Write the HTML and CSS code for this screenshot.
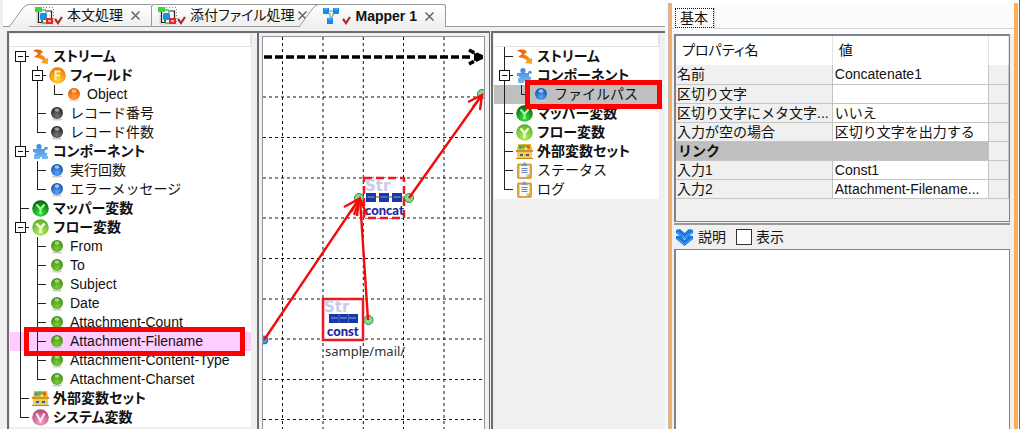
FILE: index.html
```
<!DOCTYPE html>
<html lang="ja">
<head>
<meta charset="utf-8">
<title>Mapper1</title>
<link rel="stylesheet" href="styles.css">
</head>
<body>
<svg class="defs" width="0" height="0" aria-hidden="true">
  <defs>
    <radialGradient id="gBlue" cx=".5" cy=".75" r=".7"><stop offset="0" stop-color="#5aa5f5"/><stop offset="1" stop-color="#0f4fb0"/></radialGradient>
    <radialGradient id="gGreen" cx=".5" cy=".75" r=".7"><stop offset="0" stop-color="#7ccb3a"/><stop offset="1" stop-color="#3f8f10"/></radialGradient>
    <radialGradient id="gBlack" cx=".5" cy=".75" r=".7"><stop offset="0" stop-color="#777"/><stop offset="1" stop-color="#222"/></radialGradient>
    <radialGradient id="gOrange" cx=".5" cy=".75" r=".7"><stop offset="0" stop-color="#ffa030"/><stop offset="1" stop-color="#e85c00"/></radialGradient>
    <radialGradient id="gField" cx=".5" cy=".75" r=".8"><stop offset="0" stop-color="#ffd83a"/><stop offset="1" stop-color="#ee6a00"/></radialGradient>
    <radialGradient id="gMapper" cx=".5" cy=".8" r=".8"><stop offset="0" stop-color="#3be83b"/><stop offset="1" stop-color="#045c10"/></radialGradient>
    <radialGradient id="gFlow" cx=".5" cy=".8" r=".8"><stop offset="0" stop-color="#b8f060"/><stop offset="1" stop-color="#5aab2a"/></radialGradient>
    <radialGradient id="gSys" cx=".5" cy=".8" r=".8"><stop offset="0" stop-color="#f4a0c8"/><stop offset="1" stop-color="#b0447c"/></radialGradient>
    <linearGradient id="gStream" x2="1" y2="1"><stop offset="0" stop-color="#e85010"/><stop offset="1" stop-color="#ffb020"/></linearGradient>
    <linearGradient id="gPuzzle" x2="0" y2="1"><stop offset="0" stop-color="#3a88d8"/><stop offset="1" stop-color="#78b8f4"/></linearGradient>
    <linearGradient id="gTab" x2="0" y2="1"><stop offset="0" stop-color="#ffffff"/><stop offset="1" stop-color="#efefef"/></linearGradient>
    <symbol id="blue" viewBox="0 0 17 17"><ellipse cx="8" cy="14.500" rx="5" ry="1" fill="#ccc"/><circle cx="8" cy="8" r="6" fill="url(#gBlue)"/><ellipse cx="8" cy="5" rx="2.500" ry="1.800" fill="#fff" opacity=".6"/></symbol>
    <symbol id="green" viewBox="0 0 17 17"><ellipse cx="8" cy="14.500" rx="5" ry="1" fill="#ccc"/><circle cx="8" cy="8" r="6" fill="url(#gGreen)"/><ellipse cx="8" cy="5" rx="2.500" ry="1.800" fill="#fff" opacity=".5"/></symbol>
    <symbol id="black" viewBox="0 0 17 17"><ellipse cx="8" cy="14.500" rx="5" ry="1" fill="#ccc"/><circle cx="8" cy="8" r="6" fill="url(#gBlack)"/><ellipse cx="8" cy="5" rx="2.500" ry="1.800" fill="#fff" opacity=".5"/></symbol>
    <symbol id="orange" viewBox="0 0 17 17"><ellipse cx="8" cy="14.500" rx="5" ry="1" fill="#ddd"/><circle cx="8" cy="8" r="6" fill="url(#gOrange)"/><ellipse cx="8" cy="5" rx="2.500" ry="1.800" fill="#fff" opacity=".5"/></symbol>
    <symbol id="stream" viewBox="0 0 17 17"><path d="M1 3C4 1 9 1 11 4L8 7C11 7 13 9 14 11L16 10 16 16 9 15 11 13C9 10 6 10 2 9L6 6C5 4 3 3 1 3Z" fill="url(#gStream)"/></symbol>
    <symbol id="field" viewBox="0 0 17 17"><circle cx="8.500" cy="8.500" r="8.300" fill="url(#gField)"/><path d="M6.500 13V4.500H11.500M6.500 8.500H11" fill="none" stroke="#fff3b0" stroke-width="2"/></symbol>
    <symbol id="puzzle" viewBox="0 0 17 17"><path d="M1 6H5C4 4 4 1 7 1S10 4 9 6H12C12 3 16 3 16 6L13 7V10C16 9 16 13 13 12L16 13V16H10C11 13 7 13 8 16H2V12L4 10 1 9Z" fill="url(#gPuzzle)"/></symbol>
    <symbol id="mapper" viewBox="0 0 17 17"><circle cx="8.500" cy="8.500" r="8.300" fill="url(#gMapper)"/><path d="M4.500 4.500L8.500 9 12.500 4.500M8.500 9V14" fill="none" stroke="#a8ffa0" stroke-width="2"/></symbol>
    <symbol id="flow" viewBox="0 0 17 17"><circle cx="8.500" cy="8.500" r="8.300" fill="url(#gFlow)"/><path d="M4.500 4.500L8.500 9 12.500 4.500M8.500 9V14" fill="none" stroke="#f2ffe0" stroke-width="2.400"/></symbol>
    <symbol id="system" viewBox="0 0 17 17"><circle cx="8.500" cy="8.500" r="8.300" fill="url(#gSys)"/><path d="M4.500 4.500L8.500 12 12.500 4.500" fill="none" stroke="#ffe6f4" stroke-width="2.200"/></symbol>
    <symbol id="box" viewBox="0 0 17 17"><path d="M2 1H15L16 7H1Z" fill="#e8b830"/><circle cx="4.500" cy="4" r="2" fill="#30a8a0"/><circle cx="8" cy="3.500" r="2" fill="#58b848"/><circle cx="12" cy="4" r="2" fill="#e85030"/><circle cx="10" cy="5.500" r="1.500" fill="#ffe060"/><path d="M0 7H17V9H0Z" fill="#c89820"/><path d="M1 9H16V15H1Z" fill="#f4cc50"/><path d="M0 15H17V16H0Z" fill="#b88818"/><path d="M4 11H7V13H4ZM10 11H13V13H10Z" fill="#3858a8"/></symbol>
    <symbol id="clip" viewBox="0 0 17 17"><rect x="1.500" y="2" width="14" height="14.500" rx="1" fill="#e0a838" stroke="#b88018" stroke-width=".6"/><path d="M3.500 3.500H13.500V12L10.500 15H3.500Z" fill="#f4f8ff"/><path d="M5.500 4V2H7C7 0 10 0 10 2H11.500V4Z" fill="#8898a8"/><path d="M5.500 6.500H11.500M5.500 8.500H11.500M5.500 10.500H11.500" stroke="#6888b8" stroke-width="1"/><path d="M10.500 15V12H13.500Z" fill="#c0d0e0"/></symbol>
    <symbol id="flowtab" viewBox="0 0 28 20"><path d="M2 1.500H18.500V18H2Z" fill="none" stroke="#888" stroke-dasharray="1 2"/><path d="M3.500 5V16.500H7V12M12 5H16.500V14" fill="none" stroke="#222" stroke-width="1.200"/><rect x="0" y="1" width="7" height="5" fill="#38d838"/><rect x="5" y="7" width="7" height="7" rx="1.500" fill="#1890f0"/><path d="M7 4H11V7M7 14V17H11" fill="none" stroke="#228822"/><rect x="11" y="12" width="7" height="6" fill="#e02828"/><path d="M13 15H16" stroke="#ffd0d0" stroke-width="1.500"/><path d="M20 13L23 17 27 11" fill="none" stroke="#b02830" stroke-width="2.200"/></symbol>
    <symbol id="maptab" viewBox="0 0 28 20"><path d="M5 5H12M7 7V14M12 5L8 13" stroke="#68b078" stroke-width="1.200"/><rect x="0" y="2" width="6" height="6" fill="#1688ee"/><rect x="10" y="2" width="6" height="6" fill="#1688ee"/><rect x="4" y="12" width="6" height="6" fill="#1688ee"/><path d="M1 3H5M11 3H15M5 13H9" stroke="#70c0ff"/><path d="M20 13L23 17 27 11" fill="none" stroke="#b02830" stroke-width="2.200"/></symbol>
    <symbol id="slant" viewBox="0 0 20 23"><path d="M0 23L14 4Q17 .5 20 .5V23Z" fill="url(#gTab)"/><path d="M0 23L14 4Q17 .5 20 .5" fill="none" stroke="#999"/></symbol>
  </defs>
</svg>

<main class="workspace">
  <nav class="tabs" role="tablist">
    <div class="tab-wrap">
      <svg class="slant"><use href="#slant"/></svg>
      <div class="tab"><svg class="tab-icon"><use href="#flowtab"/></svg><button class="tab-label" role="tab">本文処理</button><button class="close" aria-label="閉じる"><svg viewBox="0 0 9 9"><path d="M.5 .5L8.500 8.500M8.500 .5L.5 8.500"/></svg></button></div>
    </div>
    <div class="tab-wrap">
      <div class="tab tab-left"><svg class="tab-icon"><use href="#flowtab"/></svg><button class="tab-label" role="tab">添付ファイル処理</button><button class="close" aria-label="閉じる"><svg viewBox="0 0 9 9"><path d="M.5 .5L8.500 8.500M8.500 .5L.5 8.500"/></svg></button></div>
    </div>
    <div class="tab-wrap active">
      <svg class="slant"><use href="#slant"/></svg>
      <div class="tab tab-right"><svg class="tab-icon"><use href="#maptab"/></svg><button class="tab-label" role="tab" aria-selected="true">Mapper 1</button><button class="close" aria-label="閉じる"><svg viewBox="0 0 9 9"><path d="M.5 .5L8.500 8.500M8.500 .5L.5 8.500"/></svg></button></div>
    </div>
  </nav>

  <div class="editor">
    <section class="panel source">
      <input class="search" type="text" aria-label="検索">
      <div class="tree" role="tree">
        <div class="row group" role="treeitem"><span class="g first"><button class="toggle" aria-label="折りたたむ"></button></span><svg class="icon"><use href="#stream"/></svg>ストリーム</div>
        <div class="row group" role="treeitem"><span class="g line"></span><span class="g tee"><button class="toggle" aria-label="折りたたむ"></button></span><svg class="icon"><use href="#field"/></svg>フィールド</div>
        <div class="row" role="treeitem"><span class="g line"></span><span class="g line"></span><span class="g end"></span><svg class="icon"><use href="#orange"/></svg>Object</div>
        <div class="row" role="treeitem"><span class="g line"></span><span class="g tee"></span><svg class="icon"><use href="#black"/></svg>レコード番号</div>
        <div class="row" role="treeitem"><span class="g line"></span><span class="g end"></span><svg class="icon"><use href="#black"/></svg>レコード件数</div>
        <div class="row group" role="treeitem"><span class="g tee"><button class="toggle" aria-label="折りたたむ"></button></span><svg class="icon"><use href="#puzzle"/></svg>コンポーネント</div>
        <div class="row" role="treeitem"><span class="g line"></span><span class="g tee"></span><svg class="icon"><use href="#blue"/></svg>実行回数</div>
        <div class="row" role="treeitem"><span class="g line"></span><span class="g end"></span><svg class="icon"><use href="#blue"/></svg>エラーメッセージ</div>
        <div class="row group" role="treeitem"><span class="g tee"></span><svg class="icon"><use href="#mapper"/></svg>マッパー変数</div>
        <div class="row group" role="treeitem"><span class="g tee"><button class="toggle" aria-label="折りたたむ"></button></span><svg class="icon"><use href="#flow"/></svg>フロー変数</div>
        <div class="row" role="treeitem"><span class="g line"></span><span class="g tee"></span><svg class="icon"><use href="#green"/></svg>From</div>
        <div class="row" role="treeitem"><span class="g line"></span><span class="g tee"></span><svg class="icon"><use href="#green"/></svg>To</div>
        <div class="row" role="treeitem"><span class="g line"></span><span class="g tee"></span><svg class="icon"><use href="#green"/></svg>Subject</div>
        <div class="row" role="treeitem"><span class="g line"></span><span class="g tee"></span><svg class="icon"><use href="#green"/></svg>Date</div>
        <div class="row" role="treeitem"><span class="g line"></span><span class="g tee"></span><svg class="icon"><use href="#green"/></svg>Attachment-Count</div>
        <div class="row picked" role="treeitem" aria-selected="true"><span class="g line"></span><span class="g tee"></span><svg class="icon"><use href="#green"/></svg>Attachment-Filename<span class="mark mark-source"></span></div>
        <div class="row" role="treeitem"><span class="g line"></span><span class="g tee"></span><svg class="icon"><use href="#green"/></svg>Attachment-Content-Type</div>
        <div class="row" role="treeitem"><span class="g line"></span><span class="g end"></span><svg class="icon"><use href="#green"/></svg>Attachment-Charset</div>
        <div class="row group" role="treeitem"><span class="g tee"></span><svg class="icon"><use href="#box"/></svg>外部変数セット</div>
        <div class="row group" role="treeitem"><span class="g end"></span><svg class="icon"><use href="#system"/></svg>システム変数</div>
      </div>
    </section>

    <section class="canvas-frame">
      <div class="canvas">
        <svg class="drawing" role="img" aria-label="マッピング">
          <path d="M19.500 0V392M60 0V392M100.300 0V392M140.500 0V392M181 0V392M0 60H221M0 100.500H221M0 141H221M0 181H221M0 221.500H221M0 262H221M0 302H221M0 342.500H221M0 382.500H221" fill="none" stroke="#111" stroke-dasharray="3 3"/>
          <path d="M1 20H210" stroke="#000" stroke-width="3.500" stroke-dasharray="8 3"/>
          <path d="M206 13L219 20 206 27" fill="none" stroke="#000" stroke-width="3.500" stroke-dasharray="6 2"/><path d="M211 16L220 18V22L211 24Z"/>
          <text x="62" y="319" class="caption">sample/mail/</text>
          <rect x="101" y="141" width="40" height="40" fill="#fff" stroke="#f01820" stroke-width="2.500" stroke-dasharray="8 4"/>
          <text x="102" y="154" class="str">Str</text>
          <path d="M103 160H141" stroke="#f07020" stroke-width="1.500"/>
          <path d="M103 156h10v9h-10zM116 156h10v9h-10zM129 156h10v9h-10z" fill="#1838a8"/>
          <path d="M104.500 160h7M117.500 160h7M130.500 160h7" stroke="#88a8e8"/>
          <text x="102" y="178" class="kind">concat</text>
          <rect x="60" y="262" width="40" height="41" fill="#fff" stroke="#f01820" stroke-width="2.500"/>
          <text x="61" y="275" class="str">Str</text>
          <path d="M66 277H95V286H66Z" fill="#1838a8"/><path d="M68 281h7M77 281h7M86 281h7" stroke="#88a8e8"/><path d="M76 277V286M85.500 277V286" stroke="#4868c8"/>
          <text x="64" y="299" class="kind">const</text>
          <g fill="#90d890" stroke="#308840"><circle cx="96" cy="161" r="4.500"/><circle cx="146" cy="161" r="4.500"/><circle cx="105.500" cy="283" r="4.500"/><circle cx="219" cy="57" r="4.500"/></g>
          <circle cx="1" cy="303" r="4" fill="#4898f0" stroke="#1868c0"/>
          <g fill="none" stroke="#f40a0a" stroke-width="2.400">
            <path d="M1 303L96 162M81 170L96 162 94 179M88 175L96 162"/>
            <path d="M105 283L97 162M91 178L97 162 104 178"/>
            <path d="M146 161L219 58M205 65L219 58 217 73M210 70L219 58"/>
          </g>
        </svg>
      </div>
    </section>

    <section class="panel target">
      <input class="search" type="text" aria-label="検索">
      <div class="tree" role="tree">
        <div class="row group" role="treeitem"><span class="g tee"></span><svg class="icon"><use href="#stream"/></svg>ストリーム</div>
        <div class="row group" role="treeitem"><span class="g tee"><button class="toggle" aria-label="折りたたむ"></button></span><svg class="icon"><use href="#puzzle"/></svg>コンポーネント</div>
        <div class="row current" role="treeitem" aria-selected="true"><span class="g line"></span><span class="g end"></span><svg class="icon"><use href="#blue"/></svg>ファイルパス<span class="mark mark-target"></span></div>
        <div class="row group" role="treeitem"><span class="g tee"></span><svg class="icon"><use href="#mapper"/></svg>マッパー変数</div>
        <div class="row group" role="treeitem"><span class="g tee"></span><svg class="icon"><use href="#flow"/></svg>フロー変数</div>
        <div class="row group" role="treeitem"><span class="g tee"></span><svg class="icon"><use href="#box"/></svg>外部変数セット</div>
        <div class="row" role="treeitem"><span class="g tee"></span><svg class="icon"><use href="#clip"/></svg>ステータス</div>
        <div class="row" role="treeitem"><span class="g end"></span><svg class="icon"><use href="#clip"/></svg>ログ</div>
      </div>
    </section>
  </div>
</main>

<aside class="inspector">
  <div class="inspector-body">
    <div class="inspector-tabs" role="tablist"><button class="inspector-tab" role="tab">基本</button></div>
    <div class="props">
      <table>
        <colgroup><col class="col-name"><col class="col-value"><col class="col-more"></colgroup>
        <thead><tr><th scope="col">プロパティ名</th><th scope="col">値</th><th></th></tr></thead>
        <tbody>
          <tr><td>名前</td><td>Concatenate1</td><td></td></tr>
          <tr><td>区切り文字</td><td></td><td></td></tr>
          <tr><td>区切り文字にメタ文字...</td><td>いいえ</td><td></td></tr>
          <tr><td>入力が空の場合</td><td>区切り文字を出力する</td><td></td></tr>
          <tr class="section"><th colspan="2" scope="colgroup">リンク</th><td></td></tr>
          <tr><td>入力1</td><td>Const1</td><td></td></tr>
          <tr><td>入力2</td><td>Attachment-Filename...</td><td></td></tr>
        </tbody>
      </table>
    </div>
    <div class="desc-head">
      <svg class="chevrons" viewBox="0 0 17 17"><path d="M0 1L4 0 8.500 4 13 0 17 1V4L8.500 10 0 4ZM0 7L4 6.500 8.500 11 13 6.500 17 7V10L8.500 17 0 10Z" fill="#1878dc"/><path d="M1 3L8.500 8.500 16 3M1 9.500L8.500 15 16 9.500" fill="none" stroke="#58a8f4"/></svg>
      <label for="desc">説明</label>
      <input type="checkbox" id="show" class="check"><label for="show">表示</label>
    </div>
    <textarea class="desc" id="desc"></textarea>
  </div>
</aside>
</body>
</html>
```
FILE: styles.css
```
* { box-sizing: border-box; }

body {
  margin: 0;
  height: 100vh;
  display: grid;
  grid-template-columns: 669fr 351fr;
  overflow: hidden;
  background: #fff;
  color: #111;
  font: 14px/19px "Liberation Sans", "Noto Sans CJK JP", sans-serif;
}

button, input, textarea { font: inherit; color: inherit; }
button { padding: 0; border: 0; background: none; }
.defs { position: absolute; }

.workspace {
  display: flex;
  flex-direction: column;
  min-width: 0;
  min-height: 0;
  background: #f0f0f0;
  border-right: 4px solid #fafafa;
}

/* Document tabs */
.tabs {
  display: flex;
  margin-left: 3px;
  padding: 4px 0 0 6px;
  background: #fff;
  border-bottom: 1px solid #999;
}
.tab-wrap { display: flex; height: 22px; }
.tab-wrap.active { height: 23px; margin: 0 0 -1px -19px; }
.slant { width: 20px; height: 23px; flex: none; }
.tab {
  display: flex;
  align-items: center;
  gap: 4px;
  padding: 0 11px 0 6px;
  border-top: 1px solid #999;
  background: linear-gradient(#fff, #efefef);
}
.tab-left { border-left: 1px solid #999; border-top-left-radius: 3px; }
.tab-right { padding-left: 4px; border-right: 1px solid #999; border-top-right-radius: 3px; }
.tab-icon { width: 28px; height: 20px; }
.tab-label { white-space: nowrap; font-feature-settings: "palt"; }
.active .tab-label { font-weight: bold; }
.close { display: flex; margin-left: 4px; }
.tab-left .close { margin-left: 0; }
.close svg { width: 9px; height: 9px; stroke: #666; stroke-width: 1.5; }

/* Editor */
.editor {
  flex: 1;
  min-height: 0;
  display: grid;
  grid-template-columns: 250fr 234fr 174fr;
  padding: 4px 0 0 7px;
}
.panel {
  min-width: 0;
  border: solid #6c6c6c;
  border-width: 2px 0 0 2px;
  padding: 1px 5px 0 1px;
}
.search {
  display: block;
  width: 100%;
  height: 13px;
  border: solid #e4e4e4;
  border-width: 0 2px 1px 0;
  background: #fff;
}
.tree { background: #fff; border-right: 1px solid #eee; }
.row {
  position: relative;
  display: flex;
  align-items: center;
  height: 19px;
  padding-left: 5px;
  white-space: nowrap;
}
.group { font-weight: bold; font-feature-settings: "palt"; }
.picked { background: #fcf; }
.current { background: #bfbfbf; }
.icon { flex: none; width: 17px; height: 17px; margin-right: 4px; }

/* Tree guides */
.g {
  flex: none;
  width: 17px;
  height: 19px;
  display: flex;
  align-items: center;
  --ink: linear-gradient(#222, #222);
}
.line { background: var(--ink) 5px 0 / 1px 100% no-repeat; }
.tee { background: var(--ink) 5px 0 / 1px 100% no-repeat, var(--ink) 5px 9px / 9px 1px no-repeat; }
.end { background: var(--ink) 5px 0 / 1px 10px no-repeat, var(--ink) 5px 9px / 9px 1px no-repeat; }
.first { background: var(--ink) 5px 9px / 1px 10px no-repeat, var(--ink) 5px 9px / 9px 1px no-repeat; }
.toggle {
  width: 11px;
  height: 11px;
  border: 1px solid #111;
  background: linear-gradient(#111, #111) center / 5px 1px no-repeat #fff;
}

/* Highlight frames over selected rows */
.mark {
  position: absolute;
  z-index: 1;
  top: -5px;
  bottom: -5px;
  border: 5px solid #f00;
}
.mark-source { left: 14px; right: 6px; }
.mark-target { left: 31px; right: -3px; }

/* Mapping canvas */
.canvas-frame {
  min-width: 0;
  display: flex;
  border: solid #6c6c6c;
  border-width: 2px 1px 0 2px;
  padding: 3px 4px 0 3px;
  margin-right: 1px;
}
.canvas {
  flex: 1;
  overflow: hidden;
  border: solid #9096a4;
  border-width: 1px 1px 0;
  background: #fff;
}
.drawing { display: block; width: 100%; height: 100%; }
.caption { font: 13px "Noto Sans", sans-serif; fill: #333; }
.str { font: bold 15px "DejaVu Sans", sans-serif; fill: #c8cce8; }
.kind { font: 900 13px Lato, sans-serif; fill: #1828a0; }

/* Inspector */
.inspector {
  display: flex;
  min-width: 0;
  min-height: 0;
  padding-top: 3px;
  border-right: 1px solid #1878c8;
}
.inspector-body {
  flex: 1;
  min-width: 0;
  display: flex;
  flex-direction: column;
  padding: 0 4px 0 2px;
  margin-right: 2px;
  border: solid #ffad54;
  border-width: 0 3px;
  box-shadow: -1px 0 #bbb, 1px 0 #bbb;
  background: #f0f0f0;
}
.inspector-tabs {
  display: flex;
  margin: 0 -4px 0 -2px;
  padding: 4px 0 5px 2px;
  background: linear-gradient(#d4d4d4, #d4d4d4) 0 25px / 100% 1px no-repeat #fcfcfc;
}
.inspector-tab {
  height: 22px;
  padding: 0 6px;
  border-right: 1px solid #d4d4d4;
  background: #fcfcfc;
  outline: 1px dotted #111;
  outline-offset: -2px;
}
.props {
  height: 188px;
  border: solid #7c8490;
  border-width: 2px 1px 1px 2px;
}
table { width: 100%; border-collapse: collapse; table-layout: fixed; }
.col-name, .col-value { width: 47%; }
thead tr { height: 29px; }
tbody tr { height: 19px; }
th, td { padding: 0; border-right: 1px solid #c4c4c4; }
thead th {
  padding-left: 6px;
  border-color: #e4e4e4;
  background: #fff;
  font-weight: normal;
  font-feature-settings: "palt";
  text-align: left;
}
tbody td, tbody th {
  padding-left: 1px;
  border-bottom: 1px solid #c4c4c4;
  line-height: 18px;
  white-space: nowrap;
  overflow: hidden;
}
tbody td + td { padding-left: 2px; background: #fff; }
tbody td:last-child { background: #f0f0f0; }
.section th { background: #bfbfbf; text-align: left; padding-left: 2px; }
.desc-head {
  display: flex;
  align-items: center;
  height: 26px;
  margin-top: 1px;
  border-top: 2px solid #999;
}
.chevrons { width: 17px; height: 17px; margin: 0 5px 0 2px; }
.check {
  appearance: none;
  width: 16px;
  height: 16px;
  margin: 0 4px 0 10px;
  border: 1px solid #333;
  background: #fff;
}
.desc {
  flex: 1;
  width: 100%;
  resize: none;
  border: solid #7c8490;
  border-width: 1px 1px 0 2px;
  background: #fff;
}
```
